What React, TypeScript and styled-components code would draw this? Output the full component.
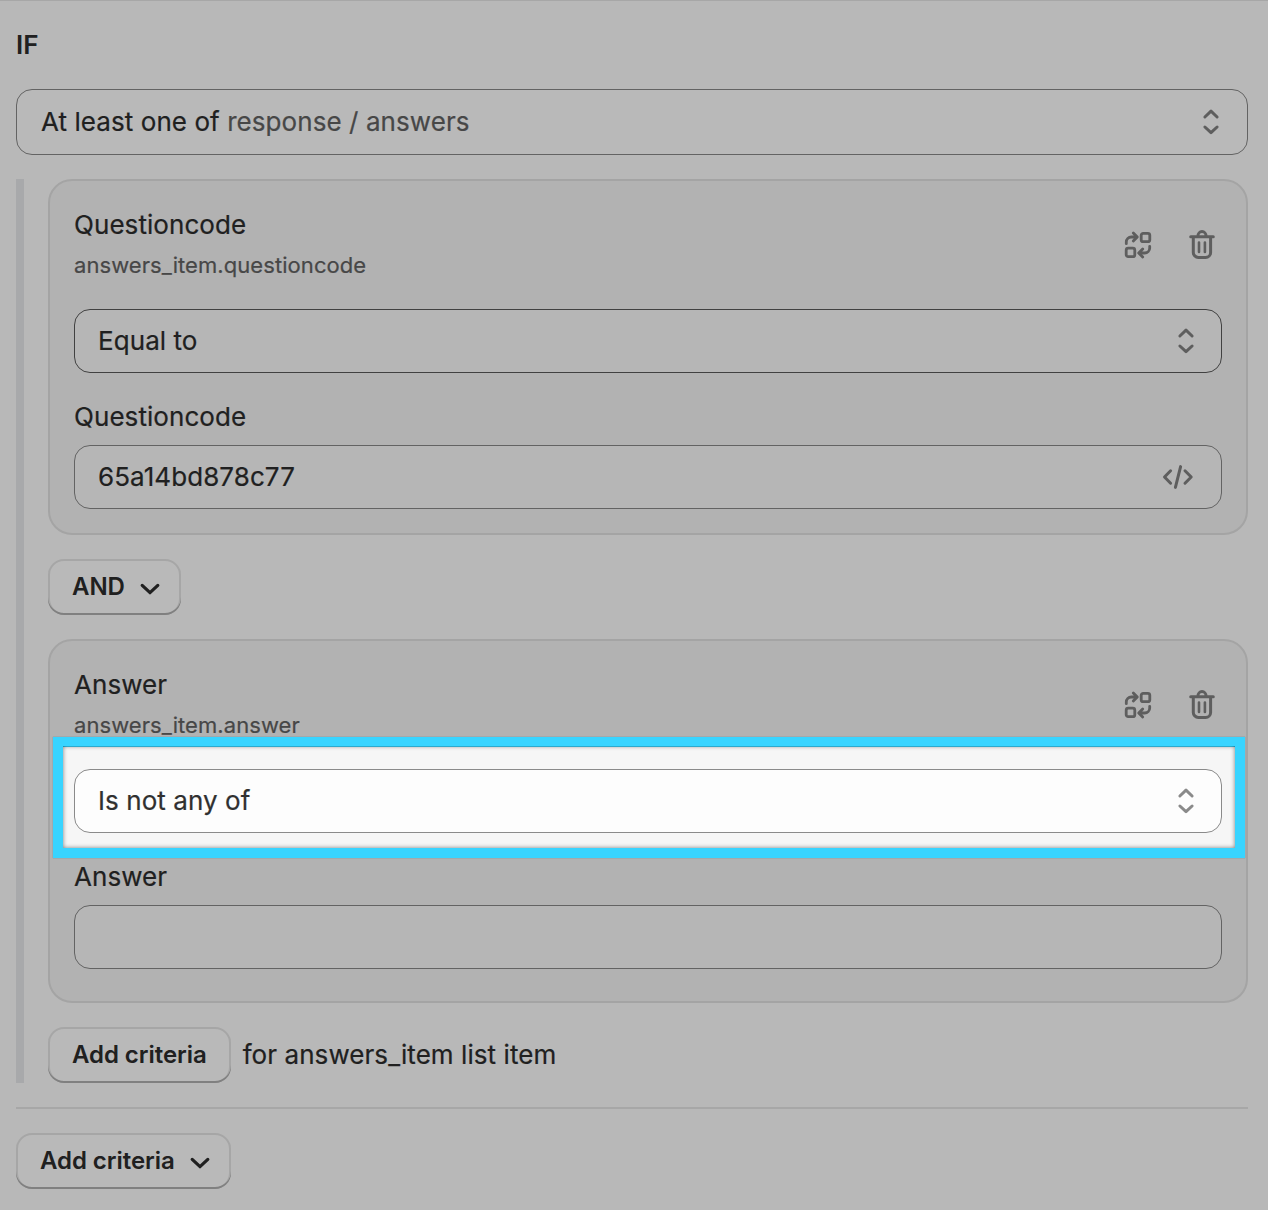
import React from 'react';
import styled, { createGlobalStyle } from 'styled-components';

const Global = createGlobalStyle`
  *, *::before, *::after { box-sizing: border-box; }
  html, body { margin: 0; background: #b8b8b8; }
  body {
    font-family: Inter, "Liberation Sans", sans-serif;
    font-size: 26px;
    font-weight: 400;
    line-height: 40px;
    letter-spacing: 0.07px;
    -webkit-text-stroke: 0.2px currentColor;
    color: #202020;
    font-optical-sizing: none;
    -webkit-font-smoothing: antialiased;
  }
`;

const Page = styled.main`
  display: flex;
  flex-direction: column;
  align-items: stretch;
  width: 1268px;
  height: 1210px;
  padding: 24px 20px 0 16px;
  border-top: 1px solid #a7a7a7;
  overflow: hidden;
`;

const Heading = styled.h2`
  margin: 0 0 24px;
  font-size: 26px;
  font-weight: 600;
  line-height: 40px;
  -webkit-text-stroke: 0;
`;

const Field = styled.div<{ $tall?: boolean; $border?: string; $fill?: string; $tone?: string }>`
  display: flex;
  align-items: center;
  justify-content: space-between;
  height: ${(p) => (p.$tall ? 66 : 64)}px;
  padding: ${(p) => (p.$tall ? '0 24px' : '0 23px')};
  border: 1px solid ${(p) => p.$border ?? '#636363'};
  border-radius: 16px;
  background: ${(p) => p.$fill ?? '#b6b6b6'};
  color: ${(p) => p.$tone ?? '#202020'};
`;

const Muted = styled.span`
  color: #474747;
  -webkit-text-stroke-color: #474747;
`;

const Group = styled.section`
  display: flex;
  flex-direction: column;
  align-items: flex-start;
  gap: 24px;
  margin-top: 24px;
  padding-left: 24px;
  border-left: 8px solid #a8a9ab;
`;

const Card = styled.article<{ $bottom?: number }>`
  display: flex;
  flex-direction: column;
  align-self: stretch;
  padding: 24px 24px ${(p) => p.$bottom ?? 24}px;
  border: 2px solid #a4a4a4;
  border-radius: 24px;
  background: #b2b2b2;
`;

const CardHeader = styled.header`
  display: flex;
  align-items: center;
  justify-content: space-between;
  height: 80px;
  margin-bottom: 24px;
`;

const Titles = styled.div`
  display: flex;
  flex-direction: column;
`;

const Path = styled.span`
  font-size: 22px;
  color: #474747;
  -webkit-text-stroke-color: #474747;
`;

const Actions = styled.div`
  display: flex;
  gap: 24px;
  color: #5e5e5e;
`;

const Label = styled.label`
  margin: 24px 0 8px;
`;

const Highlight = styled.div`
  position: relative;
  isolation: isolate;

  &::before {
    content: '';
    position: absolute;
    z-index: -1;
    inset: -32px -23px -25px -21px;
    border: 10px solid #38d4ff;
    background: #f6f6f6;
    box-shadow: 0 0 1px rgba(0, 90, 120, 0.5);
  }

  &::after {
    content: '';
    position: absolute;
    z-index: -1;
    inset: -23px -13px -15px -11px;
    box-shadow: inset 0 0 4px rgba(0, 0, 0, 0.5);
  }
`;

const Button = styled.button`
  display: flex;
  align-items: center;
  align-self: flex-start;
  gap: 13px;
  height: 56px;
  padding: 0 24px;
  border: 0;
  border-radius: 16px;
  background: #b9b9b9;
  box-shadow: inset 0 -2px 0 #808080, inset 0 0 0 2px #a6a6a6;
  color: #202020;
  font: inherit;
  font-size: 24px;
  font-weight: 600;
  letter-spacing: -0.06px;
  -webkit-text-stroke: 0;

  &:has(svg) {
    padding-right: 19.5px;
  }
`;

const AddRow = styled.div`
  display: flex;
  align-items: center;
  gap: 12px;
`;

const Divider = styled.hr`
  width: 100%;
  height: 2px;
  margin: 24px 0;
  border: 0;
  background: #a7a7a7;
`;

const Icon = styled.svg`
  display: block;
  flex: none;
  fill: none;
  stroke: currentColor;
  stroke-linecap: round;
  stroke-linejoin: round;
`;

const Sorter = ({ color = '#5e5e5e' }: { color?: string }) => (
  <Icon width="24" height="40" viewBox="0 0 24 40" strokeWidth="3" style={{ color }}>
    <path d="M5.900 15 12 9.200l6.100 5.800M5.900 25 12 30.700l6.100-5.700" />
  </Icon>
);

const Chevron = () => (
  <Icon width="24" height="24" viewBox="0 0 24 24" strokeWidth="3.2">
    <path d="m4.200 10.400 7.800 7.300 7.800-7.300" />
  </Icon>
);

const Swap = () => (
  <Icon width="40" height="40" viewBox="0 0 40 40" strokeWidth="2.8">
    <rect x="23.200" y="8.300" width="8.600" height="8.400" rx="2" />
    <rect x="8.200" y="23.200" width="8.600" height="8.500" rx="2" />
    <path d="M8.300 18.700v-1.700a5 5 0 0 1 5-5h5.700M15.300 7.900l4 4.100-4 4.100" />
    <path d="M31.700 21.300v1.700a5 5 0 0 1-5 5h-5.700M24.700 23.900l-4 4.100 4 4.100" />
  </Icon>
);

const Trash = () => (
  <Icon width="40" height="40" viewBox="0 0 40 40" strokeWidth="3">
    <path d="M8.700 11.700h22.600M15.900 11.200a4.100 4.600 0 0 1 8.200 0M11.300 12.200v15.200a5 5 0 0 0 5 5h7.300a5 5 0 0 0 5-5v-15.200" />
    <path d="M17 17.500v9.400M22.900 17.500v9.400" strokeWidth="2.600" />
  </Icon>
);

const Code = () => (
  <Icon width="40" height="40" viewBox="0 0 40 40" strokeWidth="3" style={{ color: '#5e5e5e' }}>
    <path d="m12.600 13.800-6.100 6.200 6.100 6.200M27 13.800l6.200 6.200-6.200 6.200M22.600 9.600l-5.200 20.800" />
  </Icon>
);

const CriteriaHeader = ({ title, path }: { title: string; path: string }) => (
  <CardHeader>
    <Titles>
      <span>{title}</span>
      <Path>{path}</Path>
    </Titles>
    <Actions>
      <Swap />
      <Trash />
    </Actions>
  </CardHeader>
);

export default function App() {
  return (
    <>
      <Global />
      <Page>
        <Heading>IF</Heading>
        <Field $tall $fill="#b9b9b9">
          <span>
            At least one of <Muted>response / answers</Muted>
          </span>
          <Sorter />
        </Field>
        <Group>
          <Card>
            <CriteriaHeader title="Questioncode" path="answers_item.questioncode" />
            <Field $border="#414141">
              <span>Equal to</span>
              <Sorter />
            </Field>
            <Label>Questioncode</Label>
            <Field>
              <span>65a14bd878c77</span>
              <Code />
            </Field>
          </Card>
          <Button>
            AND <Chevron />
          </Button>
          <Card $bottom={32}>
            <CriteriaHeader title="Answer" path="answers_item.answer" />
            <Highlight>
              <Field $border="#8a8a8a" $fill="#fdfdfd" $tone="#303030">
                <span>Is not any of</span>
                <Sorter color="#8a8a8a" />
              </Field>
            </Highlight>
            <Label>Answer</Label>
            <Field />
          </Card>
          <AddRow>
            <Button>Add criteria</Button>
            <span>for answers_item list item</span>
          </AddRow>
        </Group>
        <Divider />
        <Button>
          Add criteria <Chevron />
        </Button>
      </Page>
    </>
  );
}
